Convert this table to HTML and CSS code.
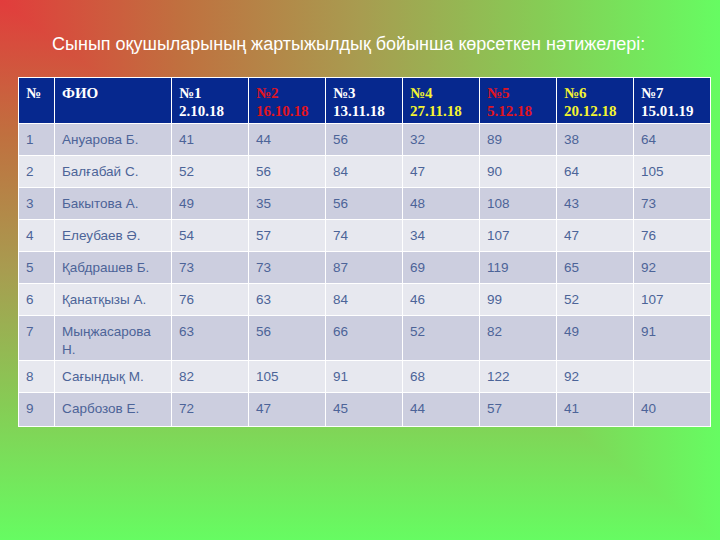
FILE: index.html
```html
<!DOCTYPE html>
<html lang="kk">
<head>
<meta charset="utf-8">
<link rel="stylesheet" href="styles.css">
</head>
<body>
<div class="page">
  <h1 class="title">Сынып оқушыларының жартыжылдық бойынша көрсеткен нәтижелері:</h1>
  <table class="grid">
    <colgroup>
      <col class="c-num"><col class="c-name"><col class="c-v"><col class="c-v"><col class="c-v"><col class="c-v"><col class="c-v"><col class="c-v"><col class="c-v">
    </colgroup>
    <thead>
      <tr>
        <th>№</th>
        <th>ФИО</th>
        <th>№1<br>2.10.18</th>
        <th class="red">№2<br>16.10.18</th>
        <th>№3<br>13.11.18</th>
        <th class="yellow">№4<br>27.11.18</th>
        <th class="red">№5<br>5.12.18</th>
        <th class="yellow">№6<br>20.12.18</th>
        <th>№7<br>15.01.19</th>
      </tr>
    </thead>
    <tbody>
      <tr class="odd"><td>1</td><td>Ануарова Б.</td><td>41</td><td>44</td><td>56</td><td>32</td><td>89</td><td>38</td><td>64</td></tr>
      <tr class="even"><td>2</td><td>Балғабай С.</td><td>52</td><td>56</td><td>84</td><td>47</td><td>90</td><td>64</td><td>105</td></tr>
      <tr class="odd"><td>3</td><td>Бакытова А.</td><td>49</td><td>35</td><td>56</td><td>48</td><td>108</td><td>43</td><td>73</td></tr>
      <tr class="even"><td>4</td><td>Елеубаев Ә.</td><td>54</td><td>57</td><td>74</td><td>34</td><td>107</td><td>47</td><td>76</td></tr>
      <tr class="odd"><td>5</td><td>Қабдрашев Б.</td><td>73</td><td>73</td><td>87</td><td>69</td><td>119</td><td>65</td><td>92</td></tr>
      <tr class="even"><td>6</td><td>Қанатқызы А.</td><td>76</td><td>63</td><td>84</td><td>46</td><td>99</td><td>52</td><td>107</td></tr>
      <tr class="odd tall"><td>7</td><td>Мыңжасарова Н.</td><td>63</td><td>56</td><td>66</td><td>52</td><td>82</td><td>49</td><td>91</td></tr>
      <tr class="even"><td>8</td><td>Сағындық М.</td><td>82</td><td>105</td><td>91</td><td>68</td><td>122</td><td>92</td><td></td></tr>
      <tr class="odd"><td>9</td><td>Сарбозов Е.</td><td>72</td><td>47</td><td>45</td><td>44</td><td>57</td><td>41</td><td>40</td></tr>
    </tbody>
  </table>
</div>
</body>
</html>
```
FILE: styles.css
```css
html, body {
  margin: 0;
  padding: 0;
}
body {
  width: 720px;
  height: 540px;
  overflow: hidden;
  position: relative;
  background: linear-gradient(to bottom, #e23c3c 0%, #c0703f 25%, #a89c50 50%, #86cc55 75%, #66fc62 100%);
}
body::before {
  content: "";
  position: absolute;
  inset: 0;
  background: linear-gradient(to right, #e23c3c 0%, #c0703f 25%, #a89c50 50%, #86cc55 75%, #66fc62 100%);
  clip-path: polygon(0 0, 100% 0, 100% 100%);
  z-index: 0;
}
.page {
  position: relative;
  z-index: 1;
  padding: 33px 12px 0 18px;
}
.title {
  margin: 0 0 22px 34px;
  font-family: "Liberation Sans", Arial, sans-serif;
  font-weight: normal;
  font-size: 18px;
  line-height: 22px;
  color: #ffffff;
}
.grid {
  width: 691px;
  table-layout: fixed;
  border-collapse: collapse;
  border: 1px solid #ffffff;
}
.c-num { width: 36px; }
.c-name { width: 117px; }
.c-v { width: 77px; }
.grid th, .grid td {
  border: 1px solid #ffffff;
  text-align: left;
  vertical-align: top;
  padding: 7px 7px 5px 7px;
}
.grid th {
  background: #06288e;
  color: #ffffff;
  font-family: "Liberation Serif", "Times New Roman", serif;
  font-weight: bold;
  font-size: 15px;
  line-height: 18px;
  height: 36px;
  padding-top: 6px;
  padding-bottom: 3px;
}
.grid th.red { color: #e0141e; }
.grid th.yellow { color: #f4f430; }
.grid td {
  font-family: "Liberation Sans", Arial, sans-serif;
  font-size: 13.5px;
  line-height: 18px;
  color: #4c6498;
  height: 18px;
  padding-top: 7px;
  padding-bottom: 6px;
}
.odd td { background: #ccceDF; }
.even td { background: #e7e8ef; }
.tall td { height: 36px; padding-bottom: 1px; }
tbody tr:last-child td { padding-bottom: 8px; }
```
